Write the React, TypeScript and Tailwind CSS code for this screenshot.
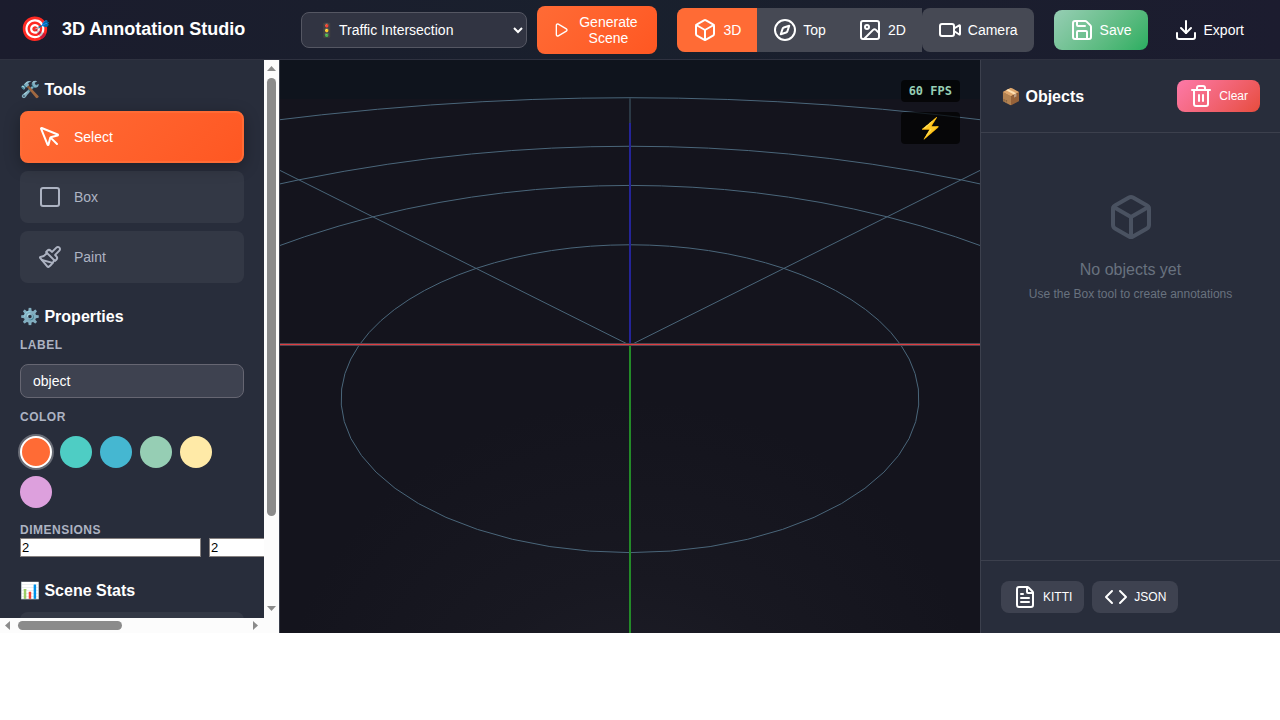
import { useState } from "react";
import {
  Box,
  Code,
  Compass,
  Download,
  FileText,
  Image as ImageIcon,
  MousePointer,
  Paintbrush,
  Play,
  Save,
  Square,
  Trash2,
  Video,
} from "lucide-react";

const tools = [
  { name: "Select", icon: MousePointer },
  { name: "Box", icon: Square },
  { name: "Paint", icon: Paintbrush },
];

const views = [
  { name: "3D", icon: Box },
  { name: "Top", icon: Compass },
  { name: "2D", icon: ImageIcon },
];

const swatches = [
  { name: "Orange", fill: "bg-[#ff6b35]" },
  { name: "Teal", fill: "bg-[#4ecdc4]" },
  { name: "Blue", fill: "bg-[#45b7d1]" },
  { name: "Green", fill: "bg-[#96ceb4]" },
  { name: "Yellow", fill: "bg-[#ffeaa7]" },
  { name: "Plum", fill: "bg-[#dda0dd]" },
];

// Ground plane seen from 30 degrees above; distances are in grid radii.
function project(x: number, z: number): string {
  const depth = 1 - 0.3469 * z;
  return `${(350 + (271 * x) / depth).toFixed(2)},${(285.3 + (135.4 * z) / depth).toFixed(2)}`;
}

function arc(radius: number, from: number, to: number): string {
  const points: string[] = [];
  const steps = Math.round((to - from) / (Math.PI / 32));
  for (let i = 0; i <= steps; i++) {
    const a = from + ((to - from) * i) / steps;
    points.push(project(radius * Math.cos(a), radius * Math.sin(a)));
  }
  return points.join(" ");
}

function Scene() {
  return (
    <svg
      className="block h-full w-full"
      viewBox="0 0 700 573"
      preserveAspectRatio="xMidYMid slice"
      role="img"
      aria-label="3D scene"
    >
      <defs>
        <radialGradient id="glow" gradientUnits="userSpaceOnUse" cx="350" cy="700" r="360">
          <stop offset="0" stopColor="#20202a" />
          <stop offset="0.5" stopColor="#181821" />
          <stop offset="1" stopColor="#14141d" />
        </radialGradient>
      </defs>
      <rect x="-700" width="2100" height="573" fill="url(#glow)" />
      <rect x="-700" width="2100" height="39" fill="#0f141d" />
      <g fill="none" stroke="#4a667a" strokeWidth="1">
        <polyline points={arc(1, 0, Math.PI * 2)} />
        <polyline points={arc(2, Math.PI, Math.PI * 2)} />
        <polyline points={arc(3, Math.PI, Math.PI * 2)} />
        <polyline points={arc(5, Math.PI, Math.PI * 2)} />
        <polyline points={`${project(-3.5, -3.5)} 350,285.3 ${project(3.5, -3.5)}`} />
      </g>
      <line x1="350" y1="38" x2="350" y2="63" stroke="#2b3945" strokeWidth="2" />
      <line x1="350" y1="63" x2="350" y2="285" stroke="#242498" strokeWidth="2" />
      <line x1="350" y1="285" x2="350" y2="573" stroke="#238a28" strokeWidth="2" />
      <line x1="-700" y1="284.5" x2="1400" y2="284.5" stroke="#4d4650" strokeWidth="3" />
      <line x1="-700" y1="284.5" x2="1400" y2="284.5" stroke="#e03c40" strokeWidth="1" />
    </svg>
  );
}

function VerticalBar() {
  return (
    <div aria-hidden="true" className="flex flex-col items-center bg-[#fcfcfc] pt-1.5 pb-[7px]">
      <svg width="9" height="5" viewBox="0 0 9 5" fill="#8b8b8b" className="shrink-0">
        <path d="M0 5 4.5 0 9 5z" />
      </svg>
      <div className="my-[7px] flex min-h-0 w-[9px] grow flex-col">
        <div className="h-[84%] rounded-full bg-[#8b8b8b]" />
      </div>
      <svg width="9" height="5" viewBox="0 0 9 5" fill="#8b8b8b" className="shrink-0">
        <path d="M0 0h9L4.5 5z" />
      </svg>
    </div>
  );
}

function HorizontalBar() {
  return (
    <div aria-hidden="true" className="flex items-center bg-[#fcfcfc] pr-1.5 pl-[5px]">
      <svg width="5" height="9" viewBox="0 0 5 9" fill="#8b8b8b" className="shrink-0">
        <path d="M5 0v9L0 4.5z" />
      </svg>
      <div className="mx-2 flex h-[9px] min-w-0 grow">
        <div className="w-[46%] rounded-full bg-[#8b8b8b]" />
      </div>
      <svg width="5" height="9" viewBox="0 0 5 9" fill="#8b8b8b" className="shrink-0">
        <path d="M0 0v9l5-4.5z" />
      </svg>
    </div>
  );
}

export default function App() {
  const [tool, setTool] = useState("Select");
  const [view, setView] = useState("3D");
  const [color, setColor] = useState("Orange");

  return (
    <div className="flex h-[calc(100vh-87px)] flex-col bg-[#14141d] font-['Liberation_Sans',Arial,sans-serif] text-sm leading-4 text-white">
      <header className="flex h-15 shrink-0 items-center border-b border-[#2f3240] bg-linear-to-r from-[#1b1c2d] via-[#19202d] to-[#1c1c2f] px-5">
        <div className="flex items-center gap-3 pb-0.5">
          <span className="text-2xl leading-7">🎯</span>
          <h1 className="text-lg leading-5 font-bold whitespace-nowrap">3D Annotation Studio</h1>
        </div>
        <div className="ml-auto flex items-center gap-5">
          <div className="flex items-center gap-2.5">
            <select
              aria-label="Scene preset"
              defaultValue="traffic"
              className="h-9 w-[226px] rounded-lg border border-[#555763] bg-[#313442] px-3 text-sm text-white"
            >
              <option value="traffic">🚦 Traffic Intersection</option>
            </select>
            <button className="flex h-12 w-30 items-center gap-1.5 rounded-lg bg-linear-135 from-[#ff6b35] to-[#ff5722] px-4">
              <Play size={16} className="shrink-0" />
              <span className="grow text-center">Generate Scene</span>
            </button>
          </div>
          <div className="flex items-center">
            <div className="flex overflow-hidden rounded-l-lg bg-[#464954]">
              {views.map(({ name, icon: Icon }) => (
                <button
                  key={name}
                  onClick={() => setView(name)}
                  className={`flex h-11 items-center gap-1.5 px-4 ${view === name ? "bg-[#ff6b35]" : ""}`}
                >
                  <Icon size={24} />
                  {name}
                </button>
              ))}
            </div>
            <button className="flex h-11 items-center gap-1.5 rounded-lg bg-[#464954] px-4">
              <Video size={24} />
              Camera
            </button>
          </div>
          <div className="flex items-center gap-2.5">
            <button className="flex h-10 items-center gap-1.5 rounded-lg bg-linear-135 from-[#96ceb4] to-[#27ae60] px-4">
              <Save size={24} />
              Save
            </button>
            <button className="flex h-10 items-center gap-1.5 rounded-lg px-4">
              <Download size={24} />
              Export
            </button>
          </div>
        </div>
      </header>

      <div className="flex min-h-0 grow">
        <aside className="grid w-70 shrink-0 grid-cols-[minmax(0,1fr)_15px] grid-rows-[minmax(0,1fr)_15px] border-r border-[#393d4a] bg-[#282d3b]">
          <div className="flex flex-col gap-6 overflow-auto p-5">
            <section>
              <h3 className="mb-3 text-base leading-[19px] font-bold">🛠️ Tools</h3>
              <div className="flex flex-col gap-2">
                {tools.map(({ name, icon: Icon }) => (
                  <button
                    key={name}
                    onClick={() => setTool(name)}
                    className={`flex h-13 items-center gap-3 rounded-lg border-2 px-4 ${
                      tool === name
                        ? "border-[#ff6b35] bg-linear-135 from-[#ff6b35] to-[#ff5722] text-white shadow-[0_4px_16px_rgba(0,0,0,0.3)]"
                        : "border-transparent bg-white/5 text-[#adb3c2]"
                    }`}
                  >
                    <Icon size={24} />
                    {name}
                  </button>
                ))}
              </div>
            </section>

            <section>
              <h3 className="mb-3 text-base leading-[19px] font-bold">⚙️ Properties</h3>
              <label htmlFor="label" className="block text-xs leading-[14px] font-bold tracking-[0.5px] text-[#adb3c2]">
                LABEL
              </label>
              <input
                id="label"
                defaultValue="object"
                className="mt-3 mb-3 block h-[34px] w-full rounded-lg border border-[#666672] bg-[#3e4250] px-3 text-sm"
              />
              <div className="text-xs leading-[14px] font-bold tracking-[0.5px] text-[#adb3c2]">COLOR</div>
              <div className="mt-3 flex flex-wrap gap-2">
                {swatches.map(({ name, fill }) => (
                  <button
                    key={name}
                    aria-label={name}
                    onClick={() => setColor(name)}
                    className={`size-8 rounded-full ${fill} ${
                      color === name ? "border-2 border-white shadow-[0_0_0_2px_#696c76]" : ""
                    }`}
                  />
                ))}
              </div>
              <fieldset className="mt-[15px] min-w-0">
                <legend className="text-xs leading-[15px] font-bold tracking-[0.5px] text-[#adb3c2]">DIMENSIONS</legend>
                <div className="flex gap-2">
                  {["Width", "Height", "Depth"].map((axis) => (
                    <input
                      key={axis}
                      aria-label={axis}
                      defaultValue="2"
                      className="h-[19px] w-[181px] shrink-0 border border-[#85807f] bg-white px-px text-[13px] text-black"
                    />
                  ))}
                </div>
              </fieldset>
            </section>

            <section>
              <h3 className="mb-3 text-base leading-[19px] font-bold">📊 Scene Stats</h3>
              <div className="h-11 rounded-lg bg-white/5" />
            </section>
          </div>
          <VerticalBar />
          <HorizontalBar />
          <div className="bg-[#fcfcfc]" />
        </aside>

        <main className="relative min-w-0 grow overflow-hidden">
          <Scene />
          <div className="absolute top-5 right-5 flex flex-col gap-2.5">
            <div className="rounded bg-black/70 px-2 py-1 font-['DejaVu_Sans_Mono',monospace] text-xs leading-[14px] font-bold text-[#96ceb4]">
              60 FPS
            </div>
            <div className="rounded bg-black/70 py-1 text-center text-xl leading-6">⚡</div>
          </div>
        </main>

        <aside className="flex w-75 shrink-0 flex-col border-l border-[#3c404d] bg-[#282d3b]">
          <div className="flex items-center justify-between border-b border-[#3c404d] p-5">
            <h3 className="text-base leading-[19px] font-bold">📦 Objects</h3>
            <button className="flex h-8 items-center gap-1.5 rounded-lg bg-linear-135 from-[#fd79a8] to-[#e74c3c] px-3 text-xs">
              <Trash2 size={24} />
              Clear
            </button>
          </div>
          <div className="flex grow flex-col items-center pt-15 text-[#68727f]">
            <Box size={48} className="text-[#4a5261]" />
            <p className="mt-5 text-base leading-[18px]">No objects yet</p>
            <p className="mt-2 text-xs leading-[14px]">Use the Box tool to create annotations</p>
          </div>
          <div className="flex gap-2 border-t border-[#3c404d] p-5">
            <button className="flex h-8 items-center gap-1.5 rounded-lg bg-[#3e4250] px-3 text-xs">
              <FileText size={24} />
              KITTI
            </button>
            <button className="flex h-8 items-center gap-1.5 rounded-lg bg-[#3e4250] px-3 text-xs">
              <Code size={24} />
              JSON
            </button>
          </div>
        </aside>
      </div>
    </div>
  );
}
